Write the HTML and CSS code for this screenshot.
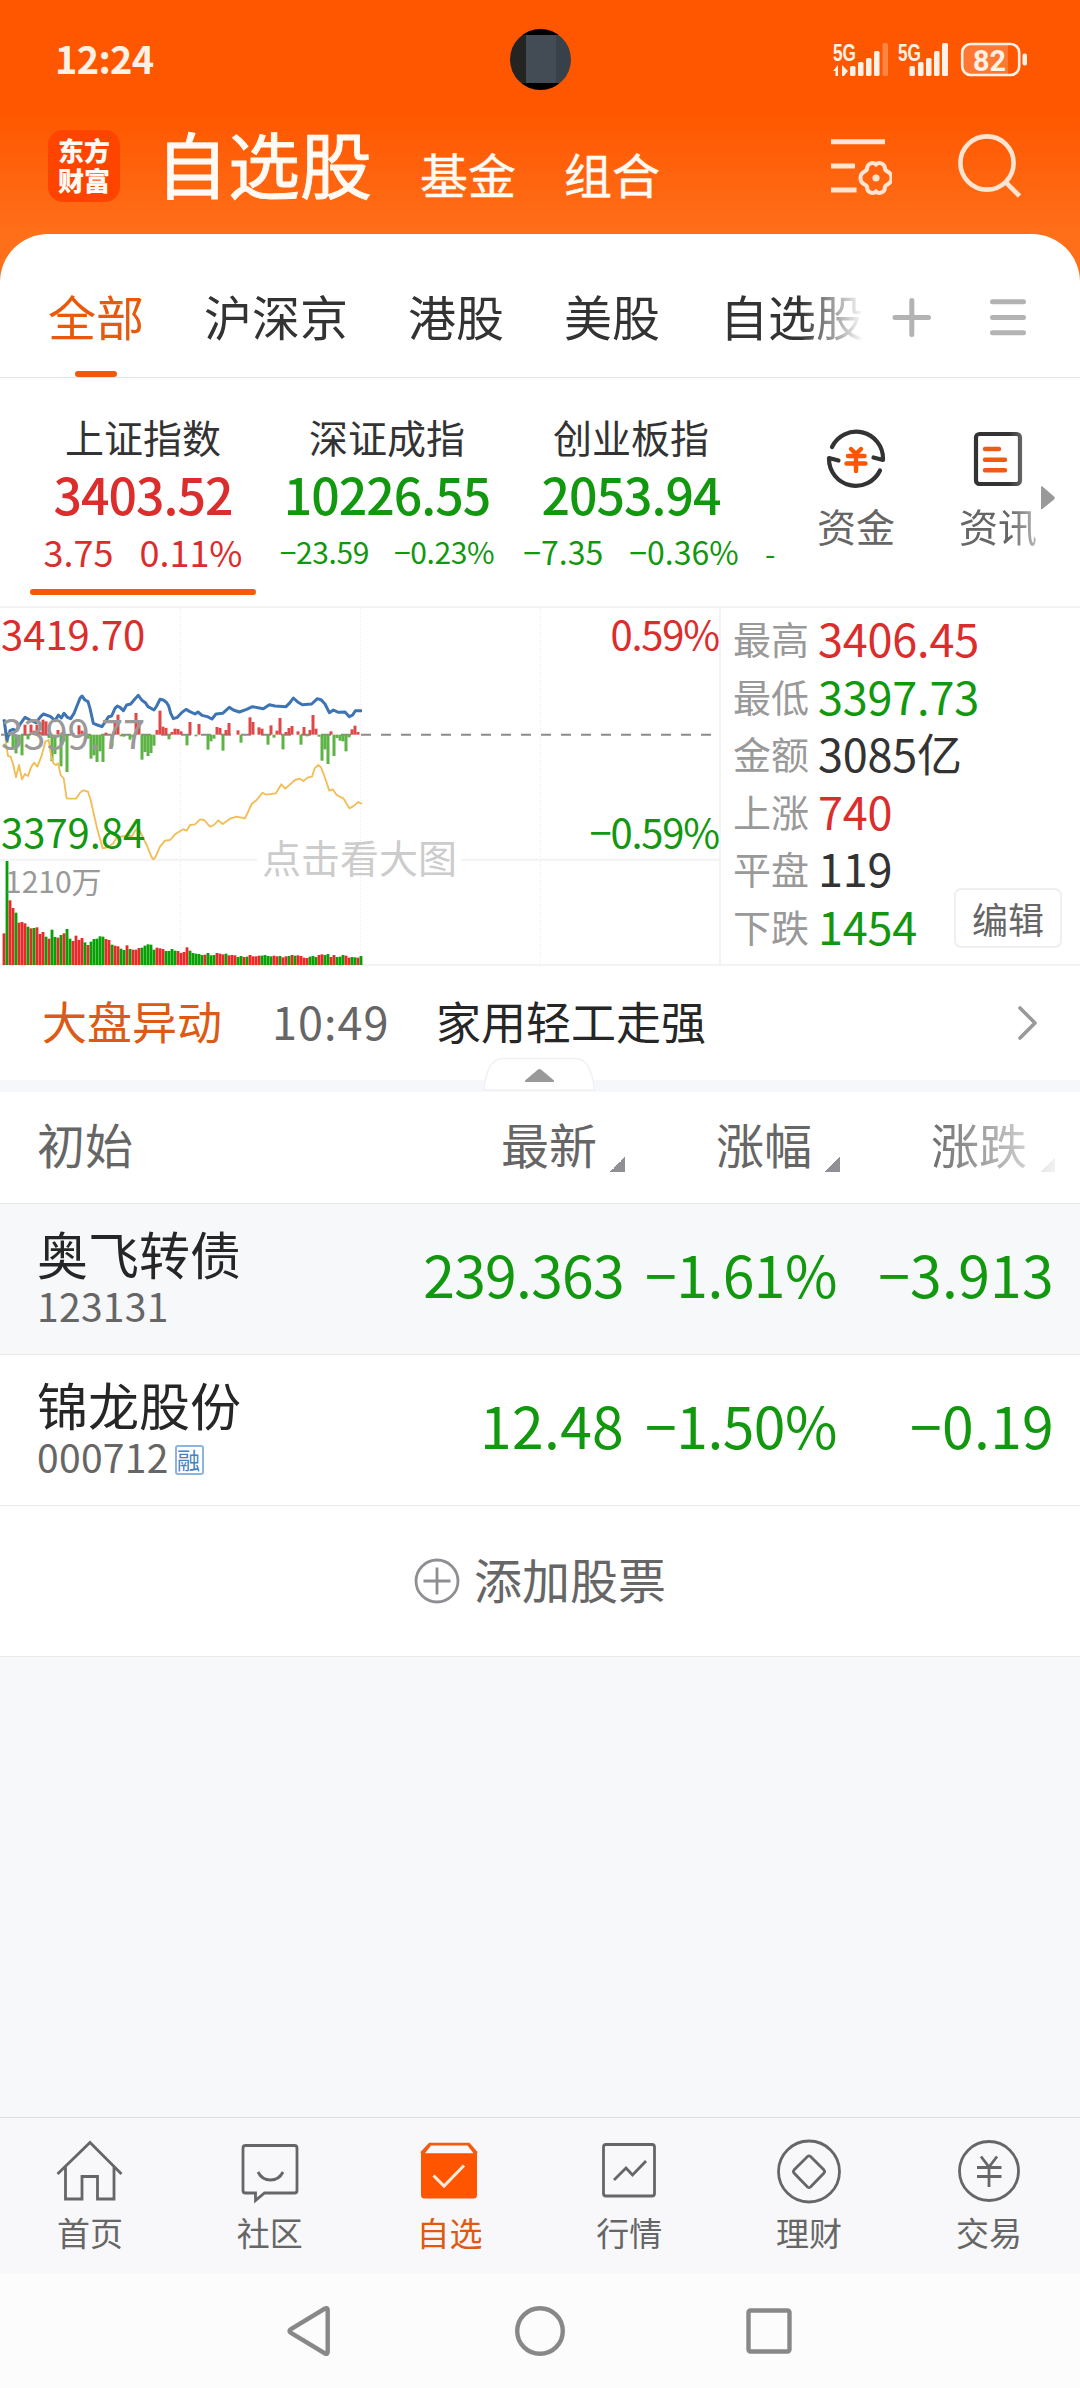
FILE: index.html
```html
<!DOCTYPE html>
<html lang="zh-CN">
<head>
<meta charset="utf-8">
<title>自选股</title>
<link rel="stylesheet" href="styles.css">
</head>
<body>
<div class="phone">
  <header class="top">
    <div class="status">
      <span class="clock">12:24</span>
      <div class="camera"><i></i></div>
      <svg class="signals" width="200" height="40" viewBox="830 40 200 40">
        <g fill="#fff1e6">
          <text x="833" y="60.500" class="net" textLength="23" lengthAdjust="spacingAndGlyphs">5G</text>
          <path d="M833 71l5-6v11h-2.500v-5zM842 65l6 6-4 5h-2z"/>
          <rect x="850" y="66" width="5.500" height="10" rx="1.500"/><rect x="858" y="62" width="5.500" height="14" rx="1.500"/>
          <rect x="866" y="58" width="5.500" height="18" rx="1.500"/><rect x="874" y="51" width="5.500" height="25" rx="1.500"/>
          <rect x="882.500" y="43" width="5.500" height="33" rx="1.500" opacity=".3"/>
          <text x="898" y="60.500" class="net" textLength="23" lengthAdjust="spacingAndGlyphs">5G</text>
          <rect x="909.500" y="66" width="5.500" height="10" rx="1.500"/><rect x="918" y="62" width="5.500" height="14" rx="1.500"/>
          <rect x="926" y="58" width="5.500" height="18" rx="1.500"/><rect x="934" y="51" width="5.500" height="25" rx="1.500"/>
          <rect x="942" y="43" width="6" height="33" rx="1.500"/>
          <path d="M970 45h38v29h-38q-7 0-7-7V52q0-7 7-7z" opacity=".22"/>
          <rect x="962.200" y="44" width="57" height="31" rx="8.500" fill="none" stroke="#fff1e6" stroke-width="2.600"/>
          <rect x="1022.500" y="53.500" width="4.500" height="12" rx="2"/>
          <text x="973" y="71" class="batt" textLength="33" lengthAdjust="spacingAndGlyphs">82</text>
        </g>
      </svg>
    </div>
    <div class="title-bar">
      <div class="logo"><span>东方</span><span>财富</span></div>
      <nav class="titles"><b>自选股</b><span>基金</span><span>组合</span></nav>
      <svg class="manage" width="64" height="64" viewBox="828 134 64 64" fill="none" stroke="#ffe4d2">
        <path d="M831 141.700h54M831 166h24M831 190h25.500" stroke-width="5"/>
        <path d="M876 164.500q2.500-2.500 6-.8 2.800 1.300 2.800 4.300.2 2.500 2.800 3.600 3.900 1.800 3.900 6.400t-3.900 6.400q-2.600 1.100-2.800 3.600 0 3-2.800 4.300-3.500 1.700-6-.8-2.500 2.500-6 .8-2.800-1.300-2.800-4.300-.2-2.500-2.800-3.600-3.900-1.800-3.900-6.400t3.900-6.400q2.600-1.100 2.800-3.600 0-3 2.800-4.300 3.500-1.700 6 .8z" stroke-width="4"/>
        <circle cx="876" cy="178" r="3.600" fill="#ffe4d2" stroke="none"/>
      </svg>
      <svg class="search" width="66" height="70" viewBox="956 130 66 70" fill="none" stroke="#ffe4d2" stroke-width="4.600">
        <circle cx="987" cy="163" r="26.600"/><path d="M1005.500 182l14 14"/>
      </svg>
    </div>
  </header>

  <main class="sheet">
    <div class="groups">
      <div class="group-list"><span class="on">全部</span><span>沪深京</span><span>港股</span><span>美股</span><span>自选股</span></div>
      <svg width="130" height="42" viewBox="892 297 130 42" class="group-tools" stroke="#b3b3b3" stroke-width="5" stroke-linecap="round">
        <path d="M895 317.500h33.500M911.800 300.500v34M992.500 301.700h31M992.500 317.500h31M992.500 332.800h31"/>
      </svg>
    </div>

    <section class="indices">
      <div class="index-list">
        <div class="index up on"><h3>上证指数</h3><strong>3403.52</strong><p class="d1"><span>3.75</span><span>0.11%</span></p></div>
        <div class="index down"><h3>深证成指</h3><strong>10226.55</strong><p class="d2"><span>−23.59</span><span>−0.23%</span></p></div>
        <div class="index down"><h3>创业板指</h3><strong>2053.94</strong><p class="d3"><span>−7.35</span><span>−0.36%</span></p></div>
        <div class="index down peek"><p><span>-</span></p></div>
      </div>
      <div class="shortcuts">
        <div class="shortcut">
          <svg width="62" height="62" viewBox="825 428 62 62" fill="none" stroke="#333" stroke-width="4.200" stroke-linecap="round" stroke-linejoin="round">
            <path d="M832 447a26.800 26.800 0 0 1 51 12v1l-9.500-2.500M880 470.500a26.800 26.800 0 0 1-51-11.500v-1l9.500 2.500"/>
            <path d="M851 449l5 5 5-5M848 456h16.500M846.500 463.500h19M856 454v17" stroke="#ff5500" stroke-width="4.400"/>
          </svg>
          <span>资金</span>
        </div>
        <div class="shortcut news">
          <svg width="62" height="62" viewBox="966 428 62 62" fill="none" stroke-linecap="round">
            <rect x="975" y="434" width="44" height="50" rx="3.500" stroke="#333" stroke-width="4.200"/>
            <path d="M984 449h14M984 459.700h20M984 470.300h20" stroke="#f05a14" stroke-width="4.400"/>
          </svg>
          <span>资讯</span>
        </div>
        <svg class="more" width="14" height="24" viewBox="0 0 14 24"><path d="M0 .5q1-.5 2 .5l11 9.500q1.500 1.500 0 3L2 22.500q-1 1-2 .5z" fill="#999"/></svg>
      </div>
    </section>

    <section class="market">
      <div class="chart">
        <svg id="chart" width="720" height="356" viewBox="0 24 2160 1068">
          <g fill="none">
            <path d="M541 24V1092M1081 24V1092M1621 24V1092" stroke="#e8e8e8" stroke-width="3" stroke-dasharray="3 5"/>
            <path d="M0 779H772M1382 779H2160" stroke="#f2f2f2" stroke-width="6"/>
            <path d="M3 404H2150" stroke="#8c8c8c" stroke-width="6" stroke-dasharray="30 30"/>
          </g>
          <g id="momentum"></g>
          <g id="volume"></g>
          <polyline fill="none" stroke="#f2bd55" stroke-width="5.500" stroke-linejoin="round" points="12,360 18,430 24,468 32,470 40,495 48,532 57,495 66,538 75,522 84,528 94,500 102,488 112,500 124,470 136,425 146,420 153,465 160,490 168,495 174,490 182,525 191,535 200,595 212,596 228,596 240,578 250,571 264,575 272,600 290,680 308,745 322,742 340,730 350,712 375,708 396,708 408,688 418,690 440,735 455,772 460,778 466,772 480,740 495,722 510,720 525,703 550,688 560,692 570,675 585,673 600,658 612,660 630,680 642,675 655,661 668,672 690,656 710,650 735,655 755,612 770,600 788,578 798,584 828,580 844,553 856,566 885,540 900,536 910,543 925,532 936,530 944,505 955,495 963,502 972,525 988,572 998,568 1010,585 1030,595 1048,625 1058,620 1075,606 1086,612"/>
          <polyline fill="none" stroke="#3c74b4" stroke-width="9" stroke-linejoin="round" points="12,358 21,420 30,392 39,388 50,392 62,370 75,352 90,360 108,368 122,350 130,342 142,346 152,350 165,362 175,345 184,354 192,340 202,352 212,356 222,340 232,315 240,295 246,288 255,300 264,305 270,325 280,370 292,375 306,380 316,365 326,350 335,348 345,325 352,318 360,322 370,332 380,315 392,312 404,298 415,286 425,300 436,308 444,320 462,330 470,318 480,298 490,300 500,308 506,318 512,340 520,356 532,352 545,338 558,328 570,335 585,342 594,336 606,346 622,350 636,357 648,342 668,340 688,322 700,330 718,336 740,328 757,320 790,326 808,314 825,318 858,320 870,308 880,294 892,305 907,314 935,312 952,296 964,300 975,312 988,338 1000,330 1015,337 1035,336 1048,350 1058,345 1066,332 1086,332"/>
        </svg>
        <span class="lab hi up">3419.70</span><span class="lab hi right up">0.59%</span>
        <span class="lab mid">3399.77</span>
        <span class="lab lo down">3379.84</span><span class="lab lo right down">−0.59%</span>
        <span class="vol">1210万</span><span class="tip">点击看大图</span>
      </div>
      <dl class="stats">
        <div><dt>最高</dt><dd class="up">3406.45</dd></div>
        <div><dt>最低</dt><dd class="down">3397.73</dd></div>
        <div><dt>金额</dt><dd>3085亿</dd></div>
        <div><dt>上涨</dt><dd class="up">740</dd></div>
        <div><dt>平盘</dt><dd>119</dd></div>
        <div><dt>下跌</dt><dd class="down">1454</dd></div>
        <button class="edit">编辑</button>
      </dl>
    </section>

    <section class="alert">
      <b>大盘异动</b><time>10:49</time><span>家用轻工走强</span>
      <svg width="22" height="36" viewBox="0 0 22 36" fill="none" stroke="#999" stroke-width="3.600" stroke-linecap="round" stroke-linejoin="round"><path d="M3 3l15 15L3 33"/></svg>
      <svg class="handle" width="114" height="34" viewBox="482 1057 114 34"><path d="M484 1090Q487 1058 503 1058.500H575Q591 1058 594.500 1090z" fill="#fff" stroke="#f0f1f3" stroke-width="1.500"/><path d="M525 1080.500L538 1069.500q1.500-1 3 0L554 1080.500q.5 1.500-1 1.500H526q-1.500 0-1-1.500z" fill="#999"/></svg>
    </section>

    <section class="watch">
      <div class="row head"><span class="name">初始</span><span class="c">最新<i></i></span><span class="c">涨幅<i></i></span><span class="c">涨跌<i></i></span></div>
      <div class="row stock pinned"><div class="name"><b>奥飞转债</b><small>123131</small></div><span class="v long">239.363</span><span class="v pct">−1.61%</span><span class="v">−3.913</span></div>
      <div class="row stock"><div class="name"><b>锦龙股份</b><small>000712<em>融</em></small></div><span class="v">12.48</span><span class="v pct">−1.50%</span><span class="v">−0.19</span></div>
      <div class="add">
        <svg width="46" height="46" viewBox="0 0 46 46" fill="none" stroke="#8e8e93" stroke-width="2.800"><circle cx="23" cy="23" r="21"/><path d="M23 9.500v27M9.500 23h27"/></svg>
        <span>添加股票</span>
      </div>
    </section>
  </main>

  <nav class="tabs">
    <a><svg viewBox="55 2138 70 66"><path d="M57.500 2174L90 2142.500l31.500 31.500M65.500 2167v32h16.500v-22.500h15.500V2199h16.500v-32"/></svg>首页</a>
    <a><svg viewBox="234.500 2138 70 66"><path d="M245 2145.500h49q2.500 0 2.500 2.500v42.500q0 2.500-2.500 2.500h-30l-9 7.500v-7.500h-10q-2.500 0-2.500-2.500V2148q0-2.500 2.500-2.500z"/><path d="M257.500 2172q4 8 12.500 8t12.500-8"/></svg>社区</a>
    <a class="on"><svg viewBox="415 2138 70 66"><path d="M422 2153l8.500-9h39.500l8 9v42q0 3.500-3.500 3.500h-49q-3.500 0-3.500-3.500z" fill="#ff5500" stroke="none"/><path d="M426 2153.200l6-7.700h36.500l6 7.700z" fill="#f8f8fa" stroke="none"/><path d="M422 2153l8.500-9.200h39.500l8 9.200" stroke="#e8601c" stroke-width="2"/><path d="M434.500 2175.500l10.500 10.500 20-20.500" stroke="#ffe9dc" stroke-width="3"/></svg>自选</a>
    <a><svg viewBox="594 2138 70 66"><rect x="603.500" y="2144.500" width="51" height="51.500" rx="2.500"/><path d="M614 2180l12-12 6.500 7 13.500-14"/></svg>行情</a>
    <a><svg viewBox="774.500 2138 70 66"><circle cx="809.500" cy="2171.500" r="30.500"/><path d="M811 2156.500l13.500 13.500q1.200 1.500 0 3L811 2187q-1.500 1.200-3 0l-13.500-14q-1.200-1.500 0-3l13.500-13.500q1.500-1.200 3 0z"/></svg>理财</a>
    <a><svg viewBox="954 2138 70 66"><circle cx="989" cy="2171" r="29.500"/><path d="M981 2156.500l8 10.500 8-10.500M977 2167.500h24.500M977 2176.500h24.500M989 2167v20"/></svg>交易</a>
  </nav>
  <div class="sysnav">
    <svg viewBox="280 2301 60 60"><path d="M325 2308.500q2.700-1.200 2.700 1.500v42q0 2.700-2.700 1.500L291 2333q-3-2 0-4z"/></svg>
    <svg viewBox="510 2301 60 60"><circle cx="540" cy="2331" r="22.800"/></svg>
    <svg viewBox="739 2301 60 60"><rect x="748.500" y="2310.500" width="41" height="41" rx="2"/></svg>
  </div>
</div>
<script src="chart.js"></script>
</body>
</html>
```
FILE: styles.css
```css
* { box-sizing: border-box; margin: 0; padding: 0; }
body { width: 1080px; font-family: "Noto Sans CJK SC", "Noto Sans", sans-serif; color: #333; background: #fff; overflow: hidden; }
b, strong, h3 { font-weight: 400; }
em { font-style: normal; }
.up { color: #dc2d2d; }
.down { color: #12980f; }
.phone { width: 1080px; height: 2388px; display: flex; flex-direction: column; overflow: hidden; background: #f7f8fa; }

.top { height: 282px; margin-bottom: -48px; background: linear-gradient(#ff5700 0, #ff5700 112px, #ff6f1a 236px); color: #fffaf3; }
.status { height: 118px; display: flex; align-items: flex-start; padding-left: 55px; }
.clock { width: 455px; font-size: 38px; font-weight: 700; line-height: 56px; margin-top: 30px; letter-spacing: -.7px; color: #fff1e6; }
.camera { width: 61px; height: 61px; margin-top: 29px; border-radius: 50%; overflow: hidden; background: linear-gradient(#000 0 6px, transparent 6px 54px, #000 54px), linear-gradient(90deg, #242423 0 50%, #38404a 50%); }
.camera i { display: block; width: 30px; height: 48px; margin: 6px auto 0; background: #434b55; }
.signals { margin: 40px 0 0 259px; }
.net { font: 700 24px "Liberation Sans", sans-serif; }
.batt { font: 700 30px Roboto, sans-serif; }
.title-bar { display: flex; align-items: flex-start; padding-left: 48px; }
.logo { width: 72px; height: 72px; margin-top: 12px; border-radius: 15px; background: #ff4400; display: flex; flex-direction: column; align-items: center; padding-top: 5px; font-size: 26px; font-weight: 900; line-height: 30px; }
.titles { display: flex; align-items: flex-start; margin-left: 36px; width: 675px; font-size: 48px; line-height: 110px; -webkit-text-stroke: .4px #fffaf3; }
.titles b { font-size: 72px; line-height: 87px; margin-right: 48px; -webkit-text-stroke: .9px #fffaf3; }
.titles span { margin-right: 48px; }
.manage { margin-top: 16px; margin-left: -3px; }
.search { margin-top: 12px; margin-left: 64px; }

.sheet { flex: none; display: flex; flex-direction: column; background: #fff; border-radius: 48px 48px 0 0; border-bottom: 1px solid #ebebed; }
.groups { height: 144px; display: flex; border-bottom: 1px solid #e4e4e4; }
.group-list { width: 864px; padding-left: 48px; display: flex; gap: 60px; font-size: 48px; line-height: 163px; white-space: nowrap; overflow: hidden; -webkit-mask-image: linear-gradient(90deg, #000 800px, transparent 864px); mask-image: linear-gradient(90deg, #000 800px, transparent 864px); }
.group-list .on { color: #e8590c; display: flex; flex-direction: column; align-items: center; }
.group-list .on::after { content: ""; width: 42px; height: 6px; margin-top: -26px; border-radius: 3px; background: #f2580b; }
.group-tools { margin: 63px 0 0 28px; overflow: visible; }

.indices { height: 230px; display: flex; border-bottom: 2px solid #f3f3f4; }
.index-list { width: 776px; padding-left: 21px; display: flex; overflow: hidden; }
.index { flex: none; width: 244px; display: flex; flex-direction: column; align-items: center; }
.index h3 { font-size: 39px; line-height: 54px; margin-top: 31px; color: #333; }
.index strong { font-size: 50px; font-weight: 500; line-height: 60px; margin-top: 0; letter-spacing: -1px; }
.index p { display: flex; line-height: 44px; margin-top: 6px; white-space: nowrap; }
.index .d1 { font-size: 36px; gap: 26px; }
.index .d2 { font-size: 30px; gap: 25px; letter-spacing: -.4px; }
.index .d3 { font-size: 32px; gap: 26px; }
.index.on::after { content: ""; width: 226px; height: 6px; margin-top: 16px; border-radius: 3px; background: #f7590a; }
.peek { align-items: flex-start; padding: 146px 0 0 12px; font-size: 30px; }
.shortcuts { flex: 1; display: flex; padding-left: 9px; }
.shortcut { width: 142px; padding-top: 50px; display: flex; flex-direction: column; align-items: center; font-size: 39px; line-height: 56px; color: #666; }
.shortcut span { margin-top: 7px; }
.news { -webkit-mask-image: linear-gradient(90deg, #000 82px, rgba(0,0,0,.3) 118px); mask-image: linear-gradient(90deg, #000 82px, rgba(0,0,0,.3) 118px); }
.more { margin: 108px 0 0 -28px; }

.market { height: 358px; display: flex; border-bottom: 2px solid #f3f3f4; }
.chart { width: 721px; position: relative; border-right: 2px solid #f3f3f4; }
.chart svg { display: block; overflow: visible; }
.lab, .vol, .tip { position: absolute; left: 1px; font-size: 40px; line-height: 48px; }
.hi { top: 1px; }
.mid { top: 100px; color: #999; }
.lo { top: 199px; }
.right { left: auto; right: 0; letter-spacing: -1.200px; }
.vol { left: 5px; top: 248px; font-size: 30px; color: #999; }
.tip { left: 262px; top: 220px; font-size: 39px; line-height: 56px; color: #ccc; }
.stats { flex: 1; padding: 1px 0 0 12px; position: relative; }
.stats div { display: flex; height: 57.600px; line-height: 57.600px; }
.stats dt { width: 85px; font-size: 38px; color: #999; }
.stats dd { font-size: 45px; letter-spacing: -.2px; }
.edit { position: absolute; right: 18px; top: 280px; width: 108px; height: 60px; border: 2px solid #efefef; border-radius: 7px; background: #fff; font: 36px/50px "Noto Sans CJK SC", sans-serif; color: #666; }

.alert { height: 126px; padding-left: 42px; display: flex; position: relative; border-bottom: 12px solid #f5f7fa; font-size: 45px; line-height: 110px; color: #262626; }
.alert b { color: #dc5a14; width: 230px; }
.alert time { color: #666; width: 164px; letter-spacing: 1px; }
.alert span { width: 581px; }
.alert > svg { margin-top: 39px; }
.alert .handle { position: absolute; left: 482px; top: 91px; margin: 0; }

.row { display: flex; }
.name { width: 410px; padding-left: 37px; }
.head { height: 112px; border-bottom: 1px solid #e9e9eb; font-size: 48px; line-height: 103px; color: #666; }
.c { width: 215px; display: flex; justify-content: flex-end; }
.c i { width: 15px; height: 15px; margin: 65px 0 0 13px; background: linear-gradient(135deg, transparent 50%, #8f8f95 50%); }
.c:last-child { -webkit-mask-image: linear-gradient(90deg, #000 85px, rgba(0,0,0,.12) 215px); mask-image: linear-gradient(90deg, #000 85px, rgba(0,0,0,.12) 215px); }
.stock { height: 151px; border-bottom: 1px solid #ebebed; }
.pinned { background: #f7f8fa; }
.stock .name { display: flex; flex-direction: column; }
.stock b { font-size: 51px; line-height: 60px; margin-top: 19px; color: #262626; }
.stock small { display: flex; align-items: center; font-size: 39px; line-height: 44px; letter-spacing: .3px; color: #666; }
.stock em { width: 29px; height: 30px; margin: 7px 0 0 6px; border: 2px solid #8bb4de; border-radius: 3px; font-size: 23px; line-height: 24px; text-align: center; color: #4482c4; text-indent: -1px; }
.v { width: 215px; padding-right: 1px; text-align: right; font-size: 57px; line-height: 138px; letter-spacing: .3px; color: #12980f; white-space: nowrap; }
.v.long { letter-spacing: -.7px; }
.v.pct { padding-right: 3px; letter-spacing: -.5px; }
.add { height: 150px; display: flex; justify-content: center; gap: 14px; font-size: 48px; line-height: 145px; color: #666; }
.add svg { margin-top: 52px; }

.tabs { margin-top: auto; height: 157px; display: flex; border-top: 1px solid #dedee0; background: #f8f8fa; }
.tabs a { width: 179.800px; padding-top: 20px; display: flex; flex-direction: column; align-items: center; font-size: 33px; line-height: 50px; color: #666; }
.tabs svg { width: 70px; height: 66px; margin-bottom: 3px; fill: none; stroke: #666; stroke-width: 2.800; }
.tabs .on { color: #dc5a14; }
.sysnav { height: 114px; flex: none; padding: 27px 281px 0 280px; display: flex; justify-content: space-between; background: #fcfcfc; }
.sysnav svg { width: 60px; height: 60px; fill: none; stroke: #888; stroke-width: 4.400; }
```
FILE: chart.js
```js
// One entry per minute; positive values rise above the zero line.
const momentum = [
  0, -25, 8, -40, -56, -20, -62, 30, -14, 30, 12, 30, 8, 45, 40, -10, -80, -58, 14, -95,
  -20, -112, 0, 4, 0, 28, 12, 0, -12, -72, -62, -82, -50, -82, 6, 0, -36, 35, 60, -5,
  -6, 0, -15, -8, 65, 36, -75, -52, -64, -55, -33, 14, 72, 24, 20, -14, 8, 18, 17, 10,
  0, -32, 38, 0, -5, 32, 0, 0, -45, -20, -12, 23, 20, -48, 14, 35, 0, 0, 13, -24,
  0, 0, 52, 38, 0, 22, 18, 0, -30, 28, -9, 12, 50, -44, 8, 20, 26, 0, 10, -30,
  23, -5, 14, 59, 18, -6, -78, -44, -88, 10, -64, -10, -18, -20, -50, -8, 16, 27, 8, 0
];
const volume = [
  95, 312, 194, 171, 157, 127, 129, 125, 115, 110, 111, 113, 93, 99, 85, 79, 106, 84, 82, 90,
  95, 108, 79, 72, 88, 75, 81, 68, 60, 70, 78, 79, 86, 85, 78, 75, 61, 58, 56, 49,
  45, 59, 48, 46, 46, 51, 52, 58, 62, 61, 46, 52, 50, 48, 42, 42, 48, 43, 42, 36,
  39, 53, 43, 36, 34, 33, 30, 31, 36, 29, 30, 36, 34, 32, 34, 29, 30, 29, 24, 27,
  24, 25, 30, 26, 26, 28, 28, 30, 27, 26, 28, 26, 27, 23, 26, 27, 30, 28, 29, 27,
  22, 21, 25, 27, 24, 30, 32, 30, 33, 24, 30, 24, 25, 30, 28, 22, 24, 23, 22, 27
];
const rising = "101101110101110100101001111010000011011001011100000111000011110000010001110111001011110000110110101111000110011000110010";
const NS = "http://www.w3.org/2000/svg";

function bar(group, i, y, h, color, w) {
  const r = document.createElementNS(NS, "rect");
  r.setAttribute("x", 12 + i * 9 - w / 2);
  r.setAttribute("y", y);
  r.setAttribute("width", w);
  r.setAttribute("height", h);
  r.setAttribute("fill", color);
  group.appendChild(r);
}

const m = document.getElementById("momentum");
momentum.forEach((v, i) => bar(m, i, v > 0 ? 404 - v : 404, Math.abs(v), v > 0 ? "#e04848" : "#5cb445", 9));
const g = document.getElementById("volume");
volume.forEach((v, i) => bar(g, i, 1095 - v, v, rising[i] === "1" ? "#e92a2a" : "#07a007", 8.5));
```
